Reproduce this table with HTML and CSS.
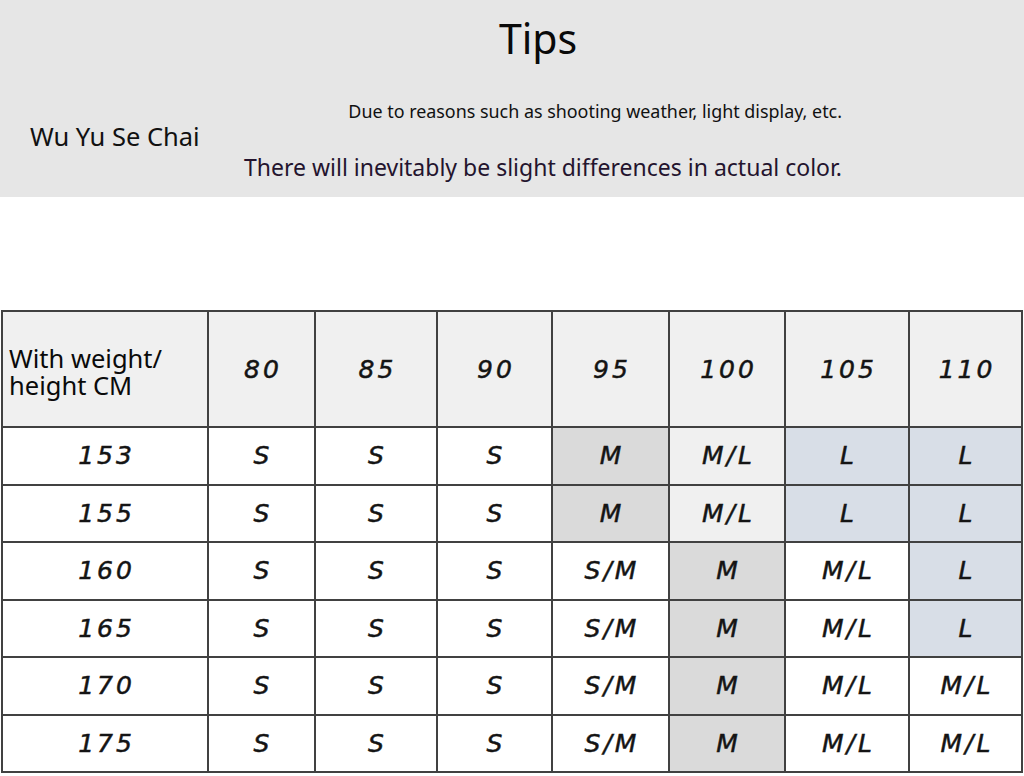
FILE: index.html
```html
<!DOCTYPE html>
<html>
<head>
<meta charset="utf-8">
<link rel="stylesheet" href="styles.css">
</head>
<body>
<header class="banner">
  <h1 class="title">Tips</h1>
  <div class="row">
    <div class="brand">Wu Yu Se Chai</div>
    <div class="notes">
      <p class="note-small">Due to reasons such as shooting weather, light display, etc.</p>
      <p class="note-large">There will inevitably be slight differences in actual color.</p>
    </div>
  </div>
</header>
<main class="chart">
  <table class="sizes">
    <colgroup>
      <col class="c0"><col class="c1"><col class="c2"><col class="c3"><col class="c4"><col class="c5"><col class="c6"><col class="c7">
    </colgroup>
    <thead>
      <tr>
        <th class="corner"><span class="corner-line">With weight/</span><span class="corner-line">height CM</span></th>
        <th>80</th><th>85</th><th>90</th><th>95</th><th>100</th><th>105</th><th>110</th>
      </tr>
    </thead>
    <tbody>
      <tr><td>153</td><td>S</td><td>S</td><td>S</td><td class="g">M</td><td class="lt">M/L</td><td class="b">L</td><td class="b">L</td></tr>
      <tr><td>155</td><td>S</td><td>S</td><td>S</td><td class="g">M</td><td class="lt">M/L</td><td class="b">L</td><td class="b">L</td></tr>
      <tr><td>160</td><td>S</td><td>S</td><td>S</td><td>S/M</td><td class="g">M</td><td>M/L</td><td class="b">L</td></tr>
      <tr><td>165</td><td>S</td><td>S</td><td>S</td><td>S/M</td><td class="g">M</td><td>M/L</td><td class="b">L</td></tr>
      <tr><td>170</td><td>S</td><td>S</td><td>S</td><td>S/M</td><td class="g">M</td><td>M/L</td><td>M/L</td></tr>
      <tr><td>175</td><td>S</td><td>S</td><td>S</td><td>S/M</td><td class="g">M</td><td>M/L</td><td>M/L</td></tr>
    </tbody>
  </table>
</main>
</body>
</html>
```
FILE: styles.css
```css
html, body {
  margin: 0;
  padding: 0;
  background: #ffffff;
}
body {
  font-family: "Noto Sans", "Open Sans", sans-serif;
  color: #111;
}
.banner {
  height: 197px;
  background: #e6e6e6;
  box-sizing: border-box;
  padding-top: 12px;
}
.title {
  margin: 0;
  padding-left: 52px;
  text-align: center;
  font-weight: 400;
  font-size: 41px;
  line-height: 52px;
  color: #0a0a0a;
}
.row {
  display: flex;
  align-items: flex-start;
  margin-top: 34px;
}
.brand {
  padding-left: 30px;
  margin-top: 21px;
  font-size: 25.5px;
  line-height: 34px;
  color: #111;
}
.notes {
  margin-left: auto;
  margin-right: 182px;
  text-align: right;
}
.notes p {
  margin: 0;
}
.note-small {
  font-size: 17.9px;
  line-height: 26px;
  color: #111;
}
.note-large {
  margin-top: 26px !important;
  font-size: 23px;
  line-height: 34px;
  color: #24142e;
}
.chart {
  padding-top: 113px;
  padding-left: 1px;
}
.sizes {
  border-collapse: collapse;
  table-layout: fixed;
  width: 1022px;
}
.sizes th, .sizes td {
  border: 2px solid #414141;
  padding: 0;
  text-align: center;
  font-family: "DejaVu Sans", sans-serif;
  font-style: oblique;
  font-weight: 400;
  font-size: 25px;
  color: #141414;
  letter-spacing: 3px;
  text-indent: 3px;
  -webkit-text-stroke: 0.5px #141414;
}
.sizes thead th {
  height: 114px;
  background: #f0f0f0;
}
.sizes tbody td {
  height: 55.5px;
  background: #ffffff;
}
.sizes thead th.corner {
  height: 108px;
  padding-top: 6px;
  text-align: left;
  font-family: "Noto Sans", "Open Sans", sans-serif;
  font-style: normal;
  font-size: 25.5px;
  line-height: 28px;
  letter-spacing: 0;
  text-indent: 0;
  -webkit-text-stroke: 0;
  padding-left: 6px;
  color: #0a0a0a;
}
.corner-line {
  display: block;
  height: 27px;
  line-height: 27px;
}
.sizes td.g { background: #dadada; }
.sizes td.lt { background: #f0f0f0; }
.sizes td.b { background: #d8dee7; }
.c0 { width: 206px; }
.c1 { width: 107px; }
.c2 { width: 122px; }
.c3 { width: 115px; }
.c4 { width: 117px; }
.c5 { width: 116px; }
.c6 { width: 124px; }
.c7 { width: 113px; }
```
